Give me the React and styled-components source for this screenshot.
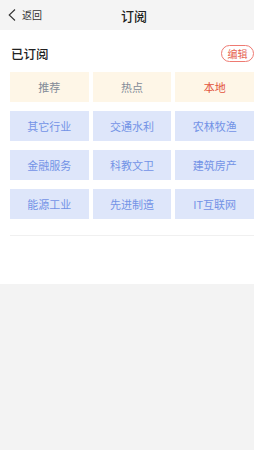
import React from "react";
import styled, { createGlobalStyle } from "styled-components";

const Global = createGlobalStyle`
  html, body { margin: 0; padding: 0; background: #f3f3f3; overflow: hidden; }
  body { font-family: "Noto Sans CJK SC", "Noto Sans", sans-serif; }
  #root { width: 254px; overflow: hidden; }
`;

const Page = styled.div`
  width: 264px;
  min-height: 450px;
  background: #f3f3f3;
`;

const Header = styled.div`
  height: 30px;
  background: #f4f4f4;
  display: grid;
  grid-template-columns: 1fr auto 1fr;
  align-items: center;
  padding: 0 8px;
  box-sizing: border-box;
`;

const Back = styled.div`
  display: flex;
  align-items: center;
  gap: 6px;
  color: #333;
  font-size: 10px;
  line-height: 1;
`;

const Title = styled.div`
  font-size: 13px;
  font-weight: 500;
  color: #222;
  padding-left: 4px;
`;

const Section = styled.div`
  background: #fff;
  padding: 14px 10px 48px;
`;

const TitleRow = styled.div`
  height: 18px;
  display: flex;
  align-items: center;
  justify-content: space-between;
  margin-bottom: 10px;
`;

const SectionTitle = styled.div`
  font-size: 12.5px;
  font-weight: 500;
  color: #222;
  padding-left: 1px;
`;

const EditButton = styled.div`
  width: 33px;
  height: 17px;
  box-sizing: border-box;
  border: 1px solid #ee7a72;
  border-radius: 9px;
  color: #e5624f;
  font-size: 10px;
  display: flex;
  align-items: center;
  justify-content: center;
`;

const Grid = styled.div`
  display: grid;
  grid-template-columns: repeat(3, 1fr);
  column-gap: 4px;
  row-gap: 9px;
`;

const Tile = styled.div`
  height: 30px;
  display: flex;
  align-items: center;
  justify-content: center;
  font-size: 11px;
  background: ${(p) => (p.$kind === "blue" ? "#dee6fa" : "#fef6e7")};
  color: ${(p) =>
    p.$kind === "blue" ? "#7393e6" : p.$kind === "red" ? "#e2533d" : "#838b98"};
`;

const Divider = styled.div`
  height: 1px;
  background: #f0f0f0;
  margin-top: 16px;
  margin-right: -10px;
`;

const tiles = [
  ["推荐", "plain"],
  ["热点", "plain"],
  ["本地", "red"],
  ["其它行业", "blue"],
  ["交通水利", "blue"],
  ["农林牧渔", "blue"],
  ["金融服务", "blue"],
  ["科教文卫", "blue"],
  ["建筑房产", "blue"],
  ["能源工业", "blue"],
  ["先进制造", "blue"],
  ["IT互联网", "blue"],
];

export default function App() {
  return (
    <>
      <Global />
      <Page>
        <Header>
          <Back>
            <svg width="8" height="12" viewBox="0 0 8 12">
              <path d="M7 0.5 L1.2 6 L7 11.5" fill="none" stroke="#333" strokeWidth="1.1" />
            </svg>
            <span>返回</span>
          </Back>
          <Title>订阅</Title>
          <div />
        </Header>
        <Section>
          <TitleRow>
            <SectionTitle>已订阅</SectionTitle>
            <EditButton>编辑</EditButton>
          </TitleRow>
          <Grid>
            {tiles.map(([t, k]) => (
              <Tile key={t} $kind={k}>{t}</Tile>
            ))}
          </Grid>
          <Divider />
        </Section>
      </Page>
    </>
  );
}
